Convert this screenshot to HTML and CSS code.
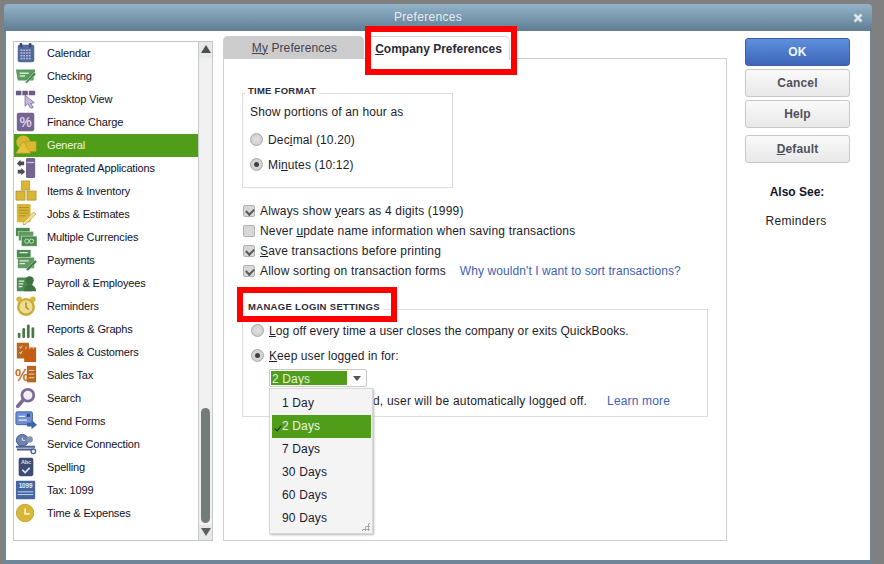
FILE: index.html
```html
<!DOCTYPE html>
<html lang="en">
<head>
<meta charset="utf-8">
<title>Preferences</title>
<link rel="stylesheet" href="styles.css">
</head>
<body>
<div class="window">
  <header class="titlebar">
    <span class="title">Preferences</span>
    <svg class="close" viewBox="0 0 10 10" width="10" height="10"><path d="M1.5 1.5l7 7M8.5 1.5l-7 7" stroke="#dfe6ea" stroke-width="2.6"/></svg>
  </header>
  <div class="content">
    <nav class="sidebar">
      <ul class="list">
        <li class="row"><svg class="ico" viewBox="0 0 24 24"><rect x="3" y="3" width="18" height="19" rx="2" fill="#54689a"/><rect x="5" y="1" width="3" height="5" rx="1.2" fill="#3c4c78"/><rect x="15" y="1" width="3" height="5" rx="1.2" fill="#3c4c78"/><path d="M6 9h12M6 12h12M6 15h12M6 18h12" stroke="#b7c3e0" stroke-width="1.6" stroke-dasharray="2 1"/></svg><span>Calendar</span></li>
        <li class="row"><svg class="ico" viewBox="0 0 24 24"><path d="M1 5h21l-2 12H3z" fill="#5a9a5c"/><path d="M5 9h10M5 12h6" stroke="#d6ecd4" stroke-width="1.6"/><path d="M11 19l10-11 2 2-10 10z" fill="#3e8442" stroke="#e6f2e2" stroke-width=".6"/></svg><span>Checking</span></li>
        <li class="row"><svg class="ico" viewBox="0 0 24 24"><path d="M1 3h6v5H1zM8 3h6v5H8zM15 3h7v5h-7z" fill="#6a5c86"/><path d="M11 8l0 12 3-3 3 5 3-1-3-4 4-1z" fill="#c7b8e0" stroke="#6a5c86" stroke-width=".8"/></svg><span>Desktop View</span></li>
        <li class="row"><svg class="ico" viewBox="0 0 24 24"><rect x="2" y="2" width="19" height="20" rx="2" fill="#75648f"/><text x="11.500" y="17" class="pct">%</text></svg><span>Finance Charge</span></li>
        <li class="row sel"><svg class="ico" viewBox="0 0 24 24"><circle cx="9" cy="9" r="7.500" fill="#d6b52f"/><rect x="12" y="8" width="11" height="11" fill="#dcb92f" stroke="#b8962a" stroke-width=".6"/><path d="M9 8l8 13H1z" fill="#e2c43a" stroke="#b8962a" stroke-width=".6"/></svg><span>General</span></li>
        <li class="row"><svg class="ico" viewBox="0 0 24 24"><rect x="12" y="1" width="10" height="22" rx="1.500" fill="#75648f"/><path d="M13 6h8" stroke="#cbbfdc" stroke-width="1.400"/><path d="M2 7l4-4v2h4v4H6v2zM11 16l-4-4v2H3v4h4v2z" fill="#4e4a54"/></svg><span>Integrated Applications</span></li>
        <li class="row"><svg class="ico" viewBox="0 0 24 24"><path d="M7 1h9v10H7zM1 12h10v10H1zM13 12h10v10H13z" fill="#d8b636" stroke="#a88a24" stroke-width=".7"/></svg><span>Items &amp; Inventory</span></li>
        <li class="row"><svg class="ico" viewBox="0 0 24 24"><rect x="2" y="1" width="15" height="20" rx="1" fill="#d8b636"/><path d="M4 5h11M4 8h11M4 11h11M4 14h8" stroke="#a88a24"/><path d="M9 21l11-11 3 2-11 11-3 1z" fill="#ecdf9e" stroke="#a88a24" stroke-width=".6"/></svg><span>Jobs &amp; Estimates</span></li>
        <li class="row"><svg class="ico" viewBox="0 0 24 24"><rect x="1" y="2" width="15" height="9" fill="#4d8a50"/><rect x="4" y="6" width="16" height="10" fill="#5f9a60" stroke="#dff0dc" stroke-width=".5"/><rect x="7" y="11" width="17" height="11" fill="#4d8a50" stroke="#dff0dc" stroke-width=".6"/><circle cx="13" cy="16.500" r="2.300" fill="none" stroke="#cfe6cd"/><circle cx="18" cy="16.500" r="2.300" fill="none" stroke="#cfe6cd"/></svg><span>Multiple Currencies</span></li>
        <li class="row"><svg class="ico" viewBox="0 0 24 24"><rect x="2" y="1" width="15" height="10" fill="#4d8a50"/><rect x="3" y="9" width="18" height="12" fill="#5f9a60" stroke="#e2f0de" stroke-width=".6"/><path d="M5 4h9M5 13h10M5 16h6" stroke="#dff0dc" stroke-width="1.200"/><path d="M12 22l10-10 2 2-10 10z" fill="#3e7c42" stroke="#e6f2e2" stroke-width=".5"/></svg><span>Payments</span></li>
        <li class="row"><svg class="ico" viewBox="0 0 24 24"><rect x="2" y="6" width="17" height="15" rx="1" fill="#4d8a50"/><path d="M4 10h6M4 13h5M4 16h4" stroke="#dff0dc" stroke-width="1.200"/><circle cx="16" cy="9" r="4.500" fill="#3f7243"/><path d="M10 21c0-5 3-7 6-7s7 2 7 7z" fill="#3f7243"/></svg><span>Payroll &amp; Employees</span></li>
        <li class="row"><svg class="ico" viewBox="0 0 24 24"><circle cx="12" cy="13" r="8.500" fill="#ecdc92" stroke="#caa832" stroke-width="2.600"/><path d="M12 8v5l3 3" stroke="#a88a24" stroke-width="1.500" fill="none"/><circle cx="4.500" cy="4.500" r="3" fill="#d8b636"/><circle cx="19.500" cy="4.500" r="3" fill="#d8b636"/></svg><span>Reminders</span></li>
        <li class="row"><svg class="ico" viewBox="0 0 24 24"><rect x="3" y="16" width="3" height="6" rx="1.500" fill="#47774a"/><rect x="8" y="11" width="3" height="11" rx="1.500" fill="#47774a"/><rect x="13" y="7" width="3" height="15" rx="1.500" fill="#47774a"/><rect x="18" y="10" width="3" height="12" rx="1.500" fill="#47774a"/></svg><span>Reports &amp; Graphs</span></li>
        <li class="row"><svg class="ico" viewBox="0 0 24 24"><path d="M2 2l13 0 2 17H2z" fill="#b9651f"/><path d="M10 7h13v16H10z" fill="#c25d12"/><path d="M5 6l1 2 2-3M5 12l1 2 2-3" stroke="#f2dcc6" fill="none"/><path d="M12 6v3M16 6v3M20 6v3" stroke="#f0c89a"/></svg><span>Sales &amp; Customers</span></li>
        <li class="row"><svg class="ico" viewBox="0 0 24 24"><text x="0" y="19" class="pct2">%</text><rect x="13" y="2" width="10" height="18" fill="#b9651f"/><path d="M15 7h6M15 11h6M15 15h6" stroke="#f2dcc6"/></svg><span>Sales Tax</span></li>
        <li class="row"><svg class="ico" viewBox="0 0 24 24"><circle cx="14" cy="9" r="6.500" fill="#f3eff8" stroke="#7c6a92" stroke-width="3"/><path d="M9 14l-6 7" stroke="#7c6a92" stroke-width="4" stroke-linecap="round"/></svg><span>Search</span></li>
        <li class="row"><svg class="ico" viewBox="0 0 24 24"><rect x="1" y="2" width="18" height="14" rx="1.500" fill="#6f8fd0" stroke="#3b5ea0"/><path d="M4 7h7M4 11h9" stroke="#e4ecfa" stroke-width="1.300"/><rect x="13" y="4" width="3.500" height="3.500" fill="#2f4a80"/><path d="M13 14h5v-3l6 5-6 5v-3h-5z" fill="#3b64ae"/></svg><span>Send Forms</span></li>
        <li class="row"><svg class="ico" viewBox="0 0 24 24"><circle cx="8" cy="8" r="6.500" fill="#6d82ae" stroke="#3f5180"/><path d="M8 5v3h3" stroke="#e4ecfa" fill="none"/><circle cx="16" cy="7" r="3.500" fill="#8293b6"/><path d="M1 15h21M2 18h17" stroke="#4a5e90" stroke-width="2"/><circle cx="20" cy="20" r="2.500" fill="none" stroke="#4a5e90" stroke-width="1.500"/></svg><span>Service Connection</span></li>
        <li class="row"><svg class="ico" viewBox="0 0 24 24"><rect x="4" y="2" width="16" height="20" rx="2" fill="#3e4c74"/><text x="12" y="9" class="abc">Abc</text><path d="M8 15l3 3 5-5" stroke="#e2e8f4" stroke-width="1.800" fill="none"/></svg><span>Spelling</span></li>
        <li class="row"><svg class="ico" viewBox="0 0 24 24"><rect x="1" y="2" width="21" height="20" rx="1" fill="#46659f"/><text x="11.500" y="10" class="num">1099</text><path d="M3 14h17M3 17h17" stroke="#cfdbf2"/></svg><span>Tax: 1099</span></li>
        <li class="row"><svg class="ico" viewBox="0 0 24 24"><circle cx="11" cy="12" r="9.500" fill="#d8b636" stroke="#c2a02c"/><path d="M11 7v6h5" stroke="#fbf3c8" stroke-width="1.800" fill="none"/></svg><span>Time &amp; Expenses</span></li>
      </ul>
      <div class="scrollbar">
        <span class="arrow up"></span>
        <div class="track"><div class="thumb"></div></div>
        <span class="arrow down"></span>
      </div>
    </nav>

    <main class="main">
      <div class="tabs">
        <div class="tab off"><span><u>My</u> Preferences</span></div>
        <div class="tab on"><span><u>C</u>ompany Preferences</span></div>
      </div>
      <section class="panel">
        <div class="group time">
          <h2 class="legend">TIME FORMAT</h2>
          <p class="lead">Show portions of an hour as</p>
          <label class="opt"><i class="radio"></i><span>Dec<u>i</u>mal (10.20)</span></label>
          <label class="opt"><i class="radio on"></i><span>Mi<u>n</u>utes (10:12)</span></label>
        </div>
        <div class="checks">
          <label class="chk"><i class="box on"></i><span>Always show <u>y</u>ears as 4 digits (1999)</span></label>
          <label class="chk"><i class="box"></i><span>Never <u>u</u>pdate name information when saving transactions</span></label>
          <label class="chk"><i class="box on"></i><span><u>S</u>ave transactions before printing</span></label>
          <label class="chk"><i class="box on"></i><span>Allow sorting on transaction forms</span><a class="link why">Why wouldn't I want to sort transactions?</a></label>
        </div>
        <div class="group login">
          <h2 class="legend wide">MANAGE LOGIN SETTINGS</h2>
          <label class="opt tight"><i class="radio"></i><span><u>L</u>og off every time a user closes the company or exits QuickBooks.</span></label>
          <label class="opt tight"><i class="radio on"></i><span><u>K</u>eep user logged in for:</span></label>
          <div class="combo"><span class="combo-val">2 Days</span><span class="caret"></span></div>
          <p class="note"><span>d, user will be automatically logged off.</span><a class="link learn">Learn more</a></p>
          <ul class="menu">
            <li>1 Day</li>
            <li class="cur">2 Days</li>
            <li>7 Days</li>
            <li>30 Days</li>
            <li>60 Days</li>
            <li>90 Days</li>
            <li class="grip"></li>
          </ul>
        </div>
      </section>
      <div class="mark mark-tab"></div>
      <div class="mark mark-login"></div>
    </main>

    <aside class="actions">
      <button class="btn ok">OK</button>
      <button class="btn">Cancel</button>
      <button class="btn">Help</button>
      <button class="btn dflt"><u>D</u>efault</button>
      <h3 class="see">Also See:</h3>
      <p class="see-link">Reminders</p>
    </aside>
  </div>
</div>
</body>
</html>
```

FILE: styles.css
```css
* { box-sizing: border-box; }
html, body { margin: 0; padding: 0; height: 100%; }
body {
  background: #808080;
  font-family: "Liberation Sans", Arial, sans-serif;
  font-size: 12px;
  letter-spacing: .15px;
  color: #1c1c2a;
  overflow: hidden;
}
ul { list-style: none; margin: 0; padding: 0; }
p, h2, h3 { margin: 0; }
i { display: block; }

.window {
  width: 868px;
  height: 560px;
  margin: 4px 0 0 4px;
  background: #6f8698;
  border-radius: 4px 4px 0 0;
  display: flex;
  flex-direction: column;
}
.titlebar {
  height: 27px;
  flex: none;
  position: relative;
  display: flex;
  align-items: center;
  justify-content: center;
  background: linear-gradient(#93b3ca, #5f7e93);
  border-radius: 4px 4px 0 0;
}
.title { color: #e6edf2; font-size: 12px; letter-spacing: .3px; margin-left: -20px; margin-top: -1px; }
.close { position: absolute; right: 9px; top: 9px; }

.content {
  flex: 1;
  margin: 0 2px 4px;
  background: #fff;
  display: flex;
  padding: 5px 20px 0 7px;
}
.sidebar {
  width: 200px;
  height: 500px;
  margin-top: 5px;
  border: 1px solid #c4c4c4;
  border-right: 0;
  display: flex;
}
.list { flex: 1; }
.row {
  height: 23px;
  display: flex;
  align-items: center;
  font-size: 11px;
  letter-spacing: -.15px;
  padding-left: 1px;
  padding-bottom: 2px;
  color: #101028;
}
.row.sel { background: #4f9d18; color: #f0f6e6; }
.ico { width: 22px; height: 22px; flex: none; margin-right: 10px; }
.pct { font: bold 15px "Liberation Sans", sans-serif; fill: #d8cfe8; text-anchor: middle; }
.pct2 { font: bold 17px "Liberation Sans", sans-serif; fill: #c8701f; }
.abc { font: bold 6px "Liberation Sans", sans-serif; fill: #d5def0; text-anchor: middle; }
.num { font: bold 7px "Liberation Sans", sans-serif; fill: #e4ecfa; text-anchor: middle; }

.scrollbar {
  width: 15px;
  flex: none;
  background: #f0f0f0;
  border-left: 1px solid #c8c8c8;
  border-right: 1px solid #c8c8c8;
  display: flex;
  flex-direction: column;
}
.arrow { height: 15px; flex: none; position: relative; background: #e8e8e8; }
.arrow.up { height: 16px; }
.arrow::after {
  content: "";
  position: absolute;
  left: 2px;
  border-left: 5px solid transparent;
  border-right: 5px solid transparent;
}
.arrow.up::after { top: 3px; border-bottom: 8px solid #4a4f4f; }
.arrow.down::after { top: 3px; border-top: 8px solid #5a6060; }
.track { flex: 1; display: flex; flex-direction: column; justify-content: flex-end; padding: 0 2px 2px; }
.thumb { height: 115px; background: #747b7b; border-radius: 5px; }

.main {
  width: 504px;
  margin-left: 10px;
  position: relative;
  display: flex;
  flex-direction: column;
}
.tabs { display: flex; height: 23px; position: relative; z-index: 1; }
.tab {
  height: 23px;
  border-radius: 5px 5px 0 0;
  display: flex;
  align-items: center;
  justify-content: center;
  color: #3c3c48;
}
.tab.off { width: 141px; background: #cccccc; color: #44444e; letter-spacing: .1px; padding-left: 2px; }
.tab.on {
  width: 145px;
  margin-left: 1px;
  background: #fff;
  border: 1px solid #d6d6d6;
  border-bottom: 0;
  font-weight: bold;
  height: 24px;
  color: #2a2a38;
  letter-spacing: 0;
  padding-left: 2px;
}
.panel {
  flex: 1;
  height: 482px;
  margin-top: -1px;
  margin-bottom: 19px;
  border: 1px solid #cfcfcf;
  padding: 34px 18px 0;
}
.group { border: 1px solid #dcdcdc; position: relative; }
.legend {
  position: absolute;
  top: -10px;
  left: 2px;
  padding: 0 3px;
  background: #fff;
  font-size: 9.500px;
  font-weight: bold;
  line-height: 13px;
  letter-spacing: .25px;
  color: #2c2c3a;
}
.legend.wide { letter-spacing: .32px; }
.time { width: 211px; height: 95px; padding: 10px 7px; }
.lead { line-height: 17px; margin-bottom: 6px; }
.opt { display: flex; align-items: center; height: 25px; }
.radio {
  width: 13px;
  height: 13px;
  border-radius: 50%;
  border: 1px solid #a8a8a8;
  background: radial-gradient(#e2e2e2, #c8c8c8);
  margin-right: 5px;
  flex: none;
  position: relative;
}
.radio.on::after {
  content: "";
  position: absolute;
  left: 3px;
  top: 3px;
  width: 5px;
  height: 5px;
  border-radius: 50%;
  background: #404040;
}
.checks { margin-top: 13px; letter-spacing: .17px; }
.chk { display: flex; align-items: center; height: 20px; }
.box {
  width: 12px;
  height: 12px;
  border-radius: 2px;
  border: 1px solid #b0b0b0;
  background: #d8d8d8;
  margin: 0 5px 0 1px;
  flex: none;
  position: relative;
}
.box.on::after {
  content: "";
  position: absolute;
  left: 2px;
  top: 0;
  width: 6px;
  height: 4px;
  margin-top: 2px;
  border-left: 2px solid #585858;
  border-bottom: 2px solid #585858;
  transform: rotate(-45deg);
}
.link { color: #3d62b8; }
.why { margin-left: 14px; letter-spacing: .08px; }
.login { width: 466px; height: 108px; margin-top: 28px; padding: 8px 8px 0; }
.opt.tight { letter-spacing: .09px; }
.combo {
  width: 98px;
  height: 18px;
  margin-left: 18px;
  margin-top: 1px;
  border: 1px solid #c8c8c8;
  border-radius: 2px;
  padding: 1px;
  display: flex;
  align-items: stretch;
}
.combo-val { width: 76px; background: #4f9d18; color: #e8f2dc; line-height: 17px; height: 14px; overflow: hidden; padding-left: 1px; }
.caret {
  margin: 5px 0 0 6px;
  border-left: 4px solid transparent;
  border-right: 4px solid transparent;
  border-top: 5px solid #555;
  height: 0;
}
.note { margin-left: 122px; margin-top: 6px; line-height: 17px; display: flex; white-space: pre; letter-spacing: .2px; }
.learn { margin-left: 20px; letter-spacing: .15px; }
.menu {
  position: absolute;
  left: 26px;
  top: 78px;
  width: 104px;
  height: 146px;
  background: #f4f4f4;
  border: 1px solid #d8d8d8;
  box-shadow: 1px 1px 2px #b8b8b8;
  padding: 3px 1px 0 2px;
  z-index: 2;
}
.menu li { height: 23px; line-height: 22px; padding-left: 10px; color: #1a1a30; }
.menu li.cur { background: #4f9d18; color: #eff6e4; position: relative; }
.menu li.cur::before {
  content: "";
  position: absolute;
  left: 4px;
  top: 9px;
  width: 3px;
  height: 6px;
  border-right: 1px solid #222;
  border-bottom: 1px solid #222;
  transform: rotate(40deg);
}
.menu li.grip {
  position: absolute;
  right: 2px;
  bottom: 2px;
  width: 9px;
  height: 9px;
  padding: 0;
  background: radial-gradient(circle, #a8a8a8 1px, transparent 1.2px) 0 0 / 3px 3px;
  clip-path: polygon(100% 0, 100% 100%, 0 100%);
}

.mark { position: absolute; border: 6px solid #f00; pointer-events: none; z-index: 3; }
.mark-tab { left: 142px; top: -10px; width: 152px; height: 49px; }
.mark-login { left: 14px; top: 251px; width: 160px; height: 35px; }

.actions { width: 105px; margin-left: 18px; display: flex; flex-direction: column; align-items: stretch; padding-top: 2px; }
.btn {
  height: 28px;
  margin-bottom: 3px;
  padding: 0;
  border: 1px solid #c8c8c8;
  border-radius: 3px;
  background: linear-gradient(#fafafa, #e8e8e8);
  font: bold 12px "Liberation Sans", Arial, sans-serif;
  letter-spacing: .15px;
  color: #50505c;
}
.btn.ok {
  background: linear-gradient(#5e90dc, #3d65b8);
  border-color: #3a5ea8;
  color: #f4f7fc;
}
.dflt { margin-top: 4px; }
.see { font-size: 12px; text-align: center; margin-top: 19px; line-height: 14px; color: #14142a; letter-spacing: 0; padding-right: 1px; }
.see-link { text-align: center; margin-top: 15px; line-height: 14px; padding-right: 3px; letter-spacing: .35px; }
```
